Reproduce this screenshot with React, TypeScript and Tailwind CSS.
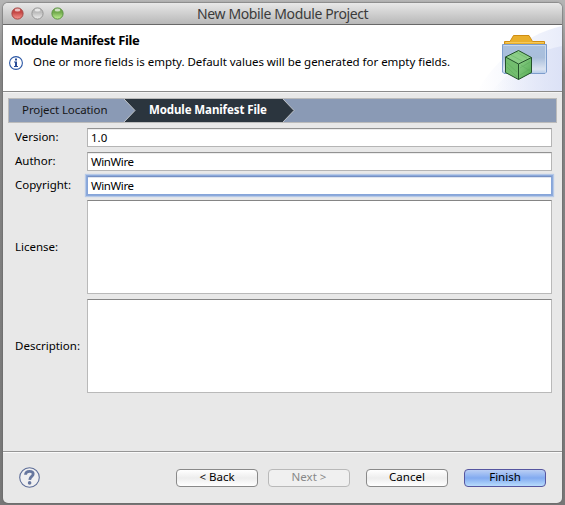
import type { ReactNode } from "react";

function FolderIcon() {
  return (
    <svg width="46" height="46" viewBox="0 0 46 46" className="block">
      <defs>
        <linearGradient id="folder" x1="0" y1="0" x2="0" y2="1">
          <stop offset="0" stopColor="#a9c0df" />
          <stop offset=".45" stopColor="#a9bedb" />
          <stop offset=".85" stopColor="#dce4f1" />
          <stop offset="1" stopColor="#b4cbea" />
        </linearGradient>
        <linearGradient id="cubeRight" x1="0" y1="0" x2="1" y2="1">
          <stop offset="0" stopColor="#8fd08b" />
          <stop offset="1" stopColor="#50a94f" />
        </linearGradient>
      </defs>
      <path d="M2.5 10V6.5H8L11.5 .5H27L30.5 6.5H42.5V10Z" fill="#eab02c" stroke="#cf8d12" />
      <path d="M3.5 7.5H42" stroke="#f7c95a" />
      <path d="M.5 9.5H44.5V37L43 38.5H2L.5 37Z" fill="url(#folder)" stroke="#7d9dcc" />
      <path d="M1.5 10.5H43.5V37.5" fill="none" stroke="#d5e2f4" opacity=".7" />
      <path d="M3.5 22L16.5 15.5L29.5 22.5V37.5L16.5 44.5L3.5 37.5Z" fill="#72bd6e" />
      <path d="M3.5 22L16.5 15.5L29.5 22.5L16.5 29Z" fill="#8bce87" />
      <path d="M16.5 29L29.5 22.5V37.5L16.5 44.5Z" fill="url(#cubeRight)" />
      <path d="M5 32L15 42M5 28L15 37M18 33L28 27M18 40L28 34M19 30L28 36M9 20L20 26M14 17L25 23" stroke="#4f9f50" strokeWidth=".6" opacity=".5" />
      <path d="M3.5 22L16.5 15.5L29.5 22.5V37.5L16.5 44.5L3.5 37.5ZM3.5 22L16.5 29L29.5 22.5M16.5 29V44.5" fill="none" stroke="#24522b" strokeLinejoin="round" />
    </svg>
  );
}

function InfoIcon() {
  return (
    <svg width="14" height="14" viewBox="0 0 14 14" className="block shrink-0">
      <circle cx="7" cy="7" r="6.4" fill="#fff" stroke="#2b57a5" strokeWidth="1.1" />
      <path d="M6 2.5H8V4.4H6ZM5 5.5H8V10H9V11H5V10H6V6.5H5Z" fill="#294c96" />
    </svg>
  );
}

function HelpIcon() {
  return (
    <svg width="21" height="21" viewBox="0 0 21 21" className="block">
      <circle cx="10.5" cy="10.5" r="9.8" fill="#efeff1" stroke="#5d6d97" strokeWidth="1.1" />
      <path d="M6.5 7.8C6.6 5.2 8.2 4.4 10.5 4.4C12.9 4.4 14.2 5.5 14.2 7.1C14.2 9.5 10.9 9.4 10.7 12.8" fill="none" stroke="#66769e" strokeWidth="2.8" />
      <circle cx="10.6" cy="15.9" r="1.8" fill="#66769e" />
    </svg>
  );
}

function Light({ rim, color, shine }: { rim: string; color: string; shine: string }) {
  const id = "light" + rim.slice(1);
  return (
    <svg width="13" height="13" viewBox="0 0 13 13" className="block">
      <defs>
        <linearGradient id={id} x1="0" y1="0" x2="0" y2="1">
          <stop offset="0" stopColor={color} />
          <stop offset=".4" stopColor={color} />
          <stop offset="1" stopColor={shine} />
        </linearGradient>
      </defs>
      <circle cx="6.5" cy="6.5" r="5.6" fill={"url(#" + id + ")"} stroke={rim} />
      <ellipse cx="6.5" cy="3" rx="2.8" ry="1.5" fill="#fff" opacity=".65" />
    </svg>
  );
}

function Row({ label, spacing, height, children }: { label: string; spacing: string; height: string; children: ReactNode }) {
  return (
    <div className={"flex items-center " + height}>
      <div className={"w-[72px] shrink-0 text-[11.5px] leading-4 whitespace-nowrap " + spacing}>{label}</div>
      {children}
    </div>
  );
}

const fieldBox = "flex h-[19px] w-[465px] items-center border bg-white pt-px pl-[3px] text-[11.5px] leading-4";
const field = fieldBox + " border-[#b5b5b5] border-t-[#929292] shadow-[inset_0_1px_0_#ededed]";
const focusedField =
  fieldBox +
  " border-[#86a5d9] border-t-[#7590c4] shadow-[inset_0_1px_0_#dfe5ef,0_0_0_1px_#8daadb,0_0_1px_2px_#b6c9e7]";
const area = "block h-full w-[465px] resize-none border border-[#b9b9b9] border-t-[#858585] bg-white outline-none";
const button =
  "flex h-[18px] w-[82px] items-center justify-center rounded-[4px] border pb-px text-[11.5px] leading-4";

export default function App() {
  return (
    <div className="h-[505px] w-[565px] overflow-hidden bg-linear-to-b from-[#b5b5b5] via-[#858585] via-15% to-[#777777] px-[3px] pt-[3px] font-['Noto_Sans','Open_Sans',sans-serif] text-black">
      <div className="flex h-[500px] w-[559px] flex-col overflow-hidden rounded-[5px] bg-[#e8e8e8] shadow-[0_0_1px_1px_#6668]">
        <div className="flex h-[22px] shrink-0 items-center border-b border-[#686868] bg-linear-to-b from-[#e8e8e8] to-[#b8b8b8] pl-[8px]">
          <div className="flex w-[53px] gap-[7px]">
            <Light rim="#a54340" color="#c54745" shine="#f89a93" />
            <Light rim="#949494" color="#bcbcbc" shine="#efefef" />
            <Light rim="#58913e" color="#72aa4d" shine="#c4f397" />
          </div>
          <div className="ml-[133px] text-[14px] leading-5 tracking-[-0.38px] whitespace-nowrap text-[#3b3b3b]">New Mobile Module Project</div>
        </div>
        <div className="flex h-[67px] shrink-0 justify-between border-b border-[#8b8b8b] bg-white">
          <div className="pt-[6px]">
            <h1 className="pl-[8px] text-[13px] leading-[18px] font-bold tracking-[-0.35px] whitespace-nowrap">Module Manifest File</h1>
            <div className="flex items-center gap-[10px] pt-[4px] pl-[6px]">
              <InfoIcon />
              <p className="pb-px text-[11.5px] leading-[18px] tracking-[-0.03px] whitespace-nowrap">One or more fields is empty. Default values will be generated for empty fields.</p>
            </div>
          </div>
          <div className="relative h-[66px] w-[85px]">
            <svg width="85" height="66" className="absolute inset-0">
              <defs>
                <linearGradient id="wash">
                  <stop offset="0" stopColor="#fff" />
                  <stop offset="1" stopColor="#e9edfa" />
                </linearGradient>
                <linearGradient id="wash2">
                  <stop offset="0" stopColor="#dfe4f7" stopOpacity="0" />
                  <stop offset="1" stopColor="#dce2f6" />
                </linearGradient>
              </defs>
              <path d="M0 66C20 34 49 9 85 1V66Z" fill="url(#wash)" />
              <path d="M15 66C34 43 61 25 85 21V66Z" fill="url(#wash2)" />
            </svg>
            <div className="relative pt-[10px] pl-[25px]">
              <FolderIcon />
            </div>
          </div>
        </div>
        <div className="flex flex-1 flex-col border-t border-[#f4f4f4] px-[5px] pt-[5px]">
          <nav className="h-[25px] w-[549px] shrink-0 border border-[#bbbbbb] bg-[#8a9ab5]">
            <div className="grid h-[23px] text-[11.5px] leading-[22px] whitespace-nowrap">
              <svg width="547" height="23" className="col-start-1 row-start-1 block">
                <path d="M115 0H274L285 11.5L274 23H115L126 11.5Z" fill="#2b353e" />
                <path d="M115 0L126 11.5L115 23M274 0L285 11.5L274 23" fill="none" stroke="#bfc3c8" />
              </svg>
              <div className="col-start-1 row-start-1 flex">
                <span className="w-[127px] pl-[13px] tracking-[-0.08px] text-[#161616]">Project Location</span>
                <span className="pl-[13px] font-bold tracking-[-0.1px] text-white">Module Manifest File</span>
              </div>
            </div>
          </nav>
          <div className="flex flex-col gap-[5px] pt-[5px] pl-[7px]">
            <Row label="Version:" spacing="pb-[2px]" height="h-[19px]">
              <div className={field}>1.0</div>
            </Row>
            <Row label="Author:" spacing="pb-[2px]" height="h-[19px]">
              <div className={field + " tracking-[-0.4px]"}>WinWire</div>
            </Row>
            <Row label="Copyright:" spacing="pb-[2px]" height="h-[19px]">
              <div className={focusedField + " tracking-[-0.4px]"}>WinWire</div>
            </Row>
            <Row label="License:" spacing="" height="h-[94px]">
              <textarea aria-label="License" className={area} />
            </Row>
            <Row label="Description:" spacing="" height="h-[94px]">
              <textarea aria-label="Description" className={area} />
            </Row>
          </div>
        </div>
        <footer className="flex h-[52px] shrink-0 items-center border-t border-[#969696] pl-[16px] shadow-[inset_0_1px_0_#fafafa]">
          <HelpIcon />
          <div className={button + " ml-[136px] border-[#898989] bg-linear-to-b from-white via-[#ededed] to-white"}>&lt; Back</div>
          <div className={button + " ml-[10px] border-[#b9b9b9] bg-[#f0f0f0] text-[#888]"}>Next &gt;</div>
          <div className={button + " ml-[16px] border-[#898989] bg-linear-to-b from-white via-[#ededed] to-white"}>Cancel</div>
          <div className={button + " ml-[16px] border-[#5656a0] bg-linear-to-b from-[#bbcff4] via-[#82aaf0] to-[#b8dcfc]"}>Finish</div>
        </footer>
      </div>
    </div>
  );
}
